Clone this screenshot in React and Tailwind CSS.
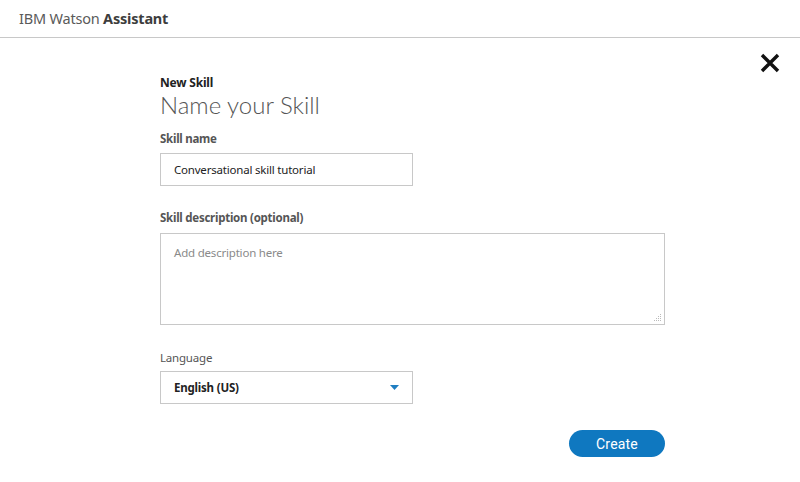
import React from "react";

export default function App() {
  return (
    <div className="w-[800px] h-[482px] bg-white overflow-hidden relative" style={{ fontFamily: '"Noto Sans", "Liberation Sans", sans-serif' }}>
      <header className="h-[38px] border-b border-[#c8c8c8] flex items-center pl-[19px]">
        <span className="text-[14.5px] text-[#5a5a5a] tracking-[-0.2px]">
          IBM Watson <span className="font-bold text-[#3d3d3d]">Assistant</span>
        </span>
      </header>
      <button className="absolute left-[759px] top-[52px] w-[21px] h-[21px] flex items-center justify-center" aria-label="Close">
        <svg width="20" height="20" viewBox="0 0 20 20">
          <path d="M2 2 L18 18 M18 2 L2 18" stroke="#111" strokeWidth="3.4" strokeLinecap="butt" />
        </svg>
      </button>
      <main className="pl-[160px] pt-[38px] w-[665px]">
        <div className="text-[12px] font-bold text-[#222] leading-[13px] tracking-[-0.2px]">New Skill</div>
        <h1 className="text-[24px] font-light text-[#555] leading-[26px] mt-[3px]" style={{ fontFamily: 'Lato, "Noto Sans", sans-serif' }}>Name your Skill</h1>
        <label className="block mt-[14px] text-[11.5px] font-bold text-[#555] leading-[14px] tracking-[-0.25px]">Skill name</label>
        <div className="mt-[7px] w-[253px] h-[33px] border border-[#c8c8c8] flex items-center pl-[13px] text-[11.5px] text-[#222] tracking-[-0.2px]">
          Conversational skill tutorial
        </div>
        <label className="block mt-[25px] text-[11.5px] font-bold text-[#555] leading-[14px] tracking-[-0.25px]">Skill description (optional)</label>
        <div className="mt-[8px] w-[505px] h-[92px] border border-[#c8c8c8] relative pl-[13px] pt-[10px] text-[11.5px] text-[#8a8a8a] tracking-[-0.2px]">
          Add description here
          <svg className="absolute right-[2px] bottom-[2px]" width="8" height="8" viewBox="0 0 8 8">
            <rect x="6" y="0" width="1" height="1" fill="#bbb" />
            <rect x="4" y="2" width="1" height="1" fill="#bbb" />
            <rect x="6" y="2" width="1" height="1" fill="#bbb" />
            <rect x="2" y="4" width="1" height="1" fill="#bbb" />
            <rect x="4" y="4" width="1" height="1" fill="#bbb" />
            <rect x="6" y="4" width="1" height="1" fill="#bbb" />
            <rect x="0" y="6" width="1" height="1" fill="#bbb" />
            <rect x="2" y="6" width="1" height="1" fill="#bbb" />
            <rect x="4" y="6" width="1" height="1" fill="#bbb" />
            <rect x="6" y="6" width="1" height="1" fill="#bbb" />
          </svg>
        </div>
        <label className="block mt-[26px] text-[11.5px] text-[#555] leading-[14px] tracking-[-0.2px]">Language</label>
        <div className="mt-[6px] w-[253px] h-[33px] border border-[#c8c8c8] flex items-center justify-between pl-[13px] pr-[13px] text-[11.5px] font-bold text-[#222] tracking-[-0.2px]">
          <span>English (US)</span>
          <svg width="9" height="5" viewBox="0 0 9 5">
            <path d="M0 0 L9 0 L4.5 5 Z" fill="#1f7ec1" />
          </svg>
        </div>
        <div className="flex justify-end mt-[26px]">
          <button className="w-[96px] h-[27px] rounded-full bg-[#0f78c0] text-white text-[14px] leading-none tracking-[0.2px]" style={{ fontFamily: 'Roboto, sans-serif' }}>
            Create
          </button>
        </div>
      </main>
    </div>
  );
}
